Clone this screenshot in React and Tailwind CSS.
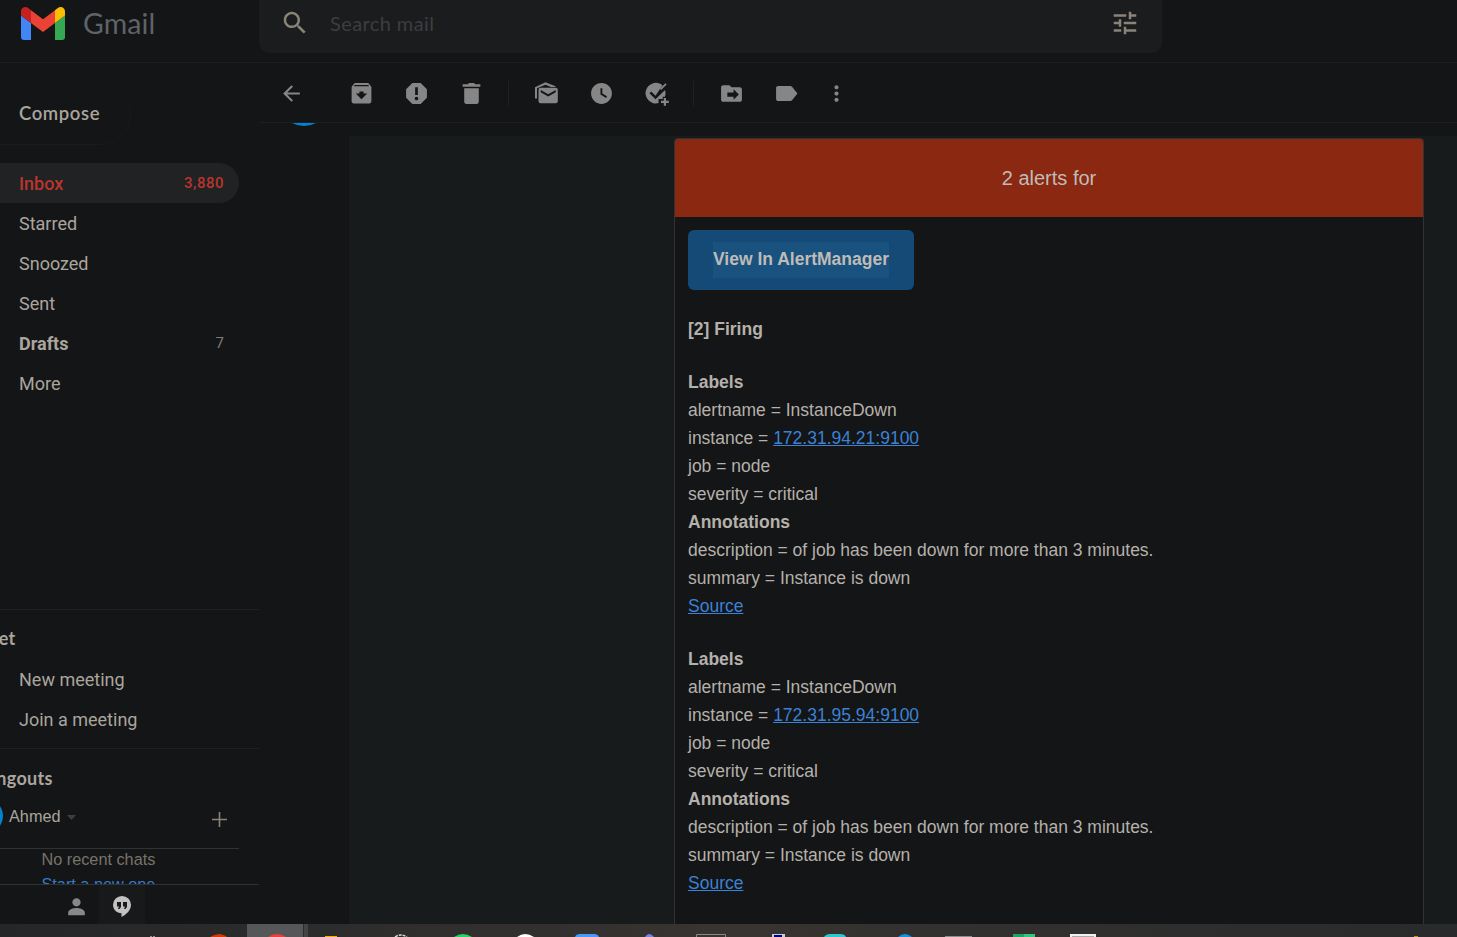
import React from "react";

const ICON = {
  search: "M15.5 14h-.79l-.28-.27C15.41 12.59 16 11.11 16 9.5 16 5.91 13.09 3 9.5 3S3 5.91 3 9.5 5.91 16 9.5 16c1.61 0 3.09-.59 4.23-1.57l.27.28v.79l5 4.99L20.49 19l-4.99-5zm-6 0C7.01 14 5 11.99 5 9.5S7.01 5 9.5 5 14 7.01 14 9.5 11.99 14 9.5 14z",
  tune: "M3 17v2h6v-2H3zM3 5v2h10V5H3zm10 16v-2h8v-2h-8v-2h-2v6h2zM7 9v2H3v2h4v2h2V9H7zm14 4v-2H11v2h10zm-6-4h2V7h4V5h-4V3h-2v6z",
  back: "M20 11H7.83l5.59-5.59L12 4l-8 8 8 8 1.41-1.41L7.83 13H20v-2z",
  archive: "M20.5 4.200l-1.200-1.300C19 2.300 18.500 2 18 2H6c-.5 0-1 .3-1.300.800L3.500 4.200C2.800 4.800 2.500 5.300 2.500 6v13.500c0 1.200.800 2 2 2h15c1.200 0 2-.800 2-2V6c0-.700-.300-1.200-1-1.800zM12 17.500l-5.500-5.500H10v-2h4v2h3.500L12 17.500zM4.500 5l1.100-1.200h12.800L19.500 5h-15z",
  report: "M16 2H8L2 8v8l6 6h8l6-6V8l-6-6zM12 18.500c-.950 0-1.700-.750-1.700-1.700s.750-1.700 1.700-1.700 1.700.750 1.700 1.700-.750 1.700-1.700 1.700zM13.300 13.500h-2.600V6h2.600v7.500z",
  trash: "M5 20c0 1.100.900 2 2 2h10c1.100 0 2-.900 2-2V7H5V20zM20.500 3.200h-5l-1-1.200h-5l-1 1.200h-5v2.200h17V3.200z",
  clock: "M12 2C6.480 2 2 6.480 2 12s4.480 10 10 10 10-4.480 10-10S17.520 2 12 2zm4.400 14.300L11 13V7h1.800v5l4.500 2.700-.900 1.600z",
  move: "M20 6h-8l-2-2H4c-1.100 0-2 .900-2 2v12c0 1.100.900 2 2 2h16c1.100 0 2-.900 2-2V8c0-1.100-.900-2-2-2zm-6 12v-3H8v-4h6V8l5 5-5 5z",
  label: "M17.300 5.500C16.900 5 16.400 4.700 15.700 4.700H4c-1.100 0-2 .900-2 2v10.600c0 1.100.900 2 2 2h11.700c.700 0 1.200-.300 1.600-.800L22.500 12l-5.200-6.500z",
  more: "M12 8c1.100 0 2-.900 2-2s-.900-2-2-2-2 .900-2 2 .900 2 2 2zm0 2c-1.100 0-2 .900-2 2s.900 2 2 2 2-.900 2-2-.900-2-2-2zm0 6c-1.100 0-2 .900-2 2s.900 2 2 2 2-.900 2-2-.900-2-2-2z",
  person: "M12 12c2.210 0 4-1.790 4-4s-1.790-4-4-4-4 1.790-4 4 1.790 4 4 4zm0 1.500c-2.670 0-8 1.340-8 4.500v2.500h16V18c0-3.160-5.330-4.500-8-4.500z",
};

function Icon({ name, className = "size-[25px]" }) {
  return (
    <svg viewBox="0 0 24 24" fill="currentColor" className={`shrink-0 ${className}`}>
      <path fillRule="evenodd" d={ICON[name]} />
    </svg>
  );
}

function GmailLogo() {
  return (
    <svg viewBox="0 0 44 33" className="h-[33px] w-[44px] shrink-0">
      <path fill="#4285f4" d="M3 33h7V16L0 8.500V30a3 3 0 0 0 3 3z" />
      <path fill="#34a853" d="M34 33h7a3 3 0 0 0 3-3V8.500L34 16z" />
      <path fill="#fbbc04" d="M34 3.200V16l10-7.500v-4c0-3.900-4.300-5.800-7.200-3.400z" />
      <path fill="#ea4335" d="M10 16V3.200l12 9 12-9V16l-12 9z" />
      <path fill="#c5221f" d="M0 4.500v4L10 16V3.200L7.200 1.100C4.300-1.300 0 .600 0 4.500z" />
    </svg>
  );
}

function Header() {
  return (
    <header className="flex h-[63px] shrink-0 items-start border-b border-[#1c1e20]">
      <div className="flex w-[259px] shrink-0 items-start pt-[7px] pl-[21px]">
        <GmailLogo />
        <span className="-mt-[2px] ml-[18px] font-[Lato] text-[28.5px] leading-[36px] tracking-[0.1px] text-[#5f6368]">Gmail</span>
      </div>
      <div className="flex h-[53px] w-[903px] items-start rounded-b-[10px] bg-[#1b1c1e] pt-[8px] pl-[21px]">
        <Icon name="search" className="size-[30px] text-[#8a8378]" />
        <span className="ml-[20px] grow font-[Lato] text-[20px] leading-[30px] tracking-[0.4px] text-[#3b3e40]">Search mail</span>
        <Icon name="tune" className="mr-[22px] size-[30px] text-[#8a8378]" />
      </div>
    </header>
  );
}

const folders = [
  { name: "Starred" },
  { name: "Snoozed" },
  { name: "Sent" },
  { name: "Drafts", count: "7", bold: true },
  { name: "More" },
];

function Sidebar() {
  return (
    <aside className="flex w-[259px] shrink-0 flex-col overflow-hidden text-[18px] text-[#aaa59d]">
      <div className="mt-[19px] flex h-[63px] w-[131px] items-center rounded-r-full border-r border-b border-[#191b1d] pt-[2px] pl-[19px] font-[Lato] text-[18.5px] font-semibold tracking-[0.6px]">
        Compose
      </div>
      <nav className="mt-[18px] font-[Roboto]">
        <div className="flex h-10 w-[239px] items-center justify-between rounded-r-full bg-[#202224] pr-[15px] pl-[19px] font-medium text-[#b9352d]">
          <span className="pt-px">Inbox</span>
          <span className="text-[15px] tracking-[0.5px]">3,880</span>
        </div>
        {folders.map((f) => (
          <div key={f.name} className="flex h-10 w-[239px] items-center justify-between pr-[15px] pl-[19px]">
            <span className={f.bold ? "pt-px font-bold" : "pt-px"}>{f.name}</span>
            <span className="text-[15px] text-[#827c73]">{f.count}</span>
          </div>
        ))}
      </nav>
      <section className="mt-[206px] h-[139px] shrink-0 border-t border-[#1e2022]">
        <h2 className="-ml-[28px] flex h-[49px] items-center pt-[8px] font-[Lato] font-bold tracking-[0.2px]">Meet</h2>
        <div className="flex h-10 items-center pl-[19px] font-[Roboto]">New meeting</div>
        <div className="flex h-10 items-center pl-[19px] font-[Roboto]">Join a meeting</div>
      </section>
      <section className="flex h-[136px] shrink-0 flex-col border-t border-[#1e2022]">
        <h2 className="mt-[15px] -ml-[27px] h-[30px] font-[Lato] leading-[29px] font-bold tracking-[0.3px]">Hangouts</h2>
        <div className="flex h-[55px] w-[239px] shrink-0 items-start border-b border-[#303335]">
          <span className="mt-[5px] -ml-[31px] size-[34px] shrink-0 rounded-full bg-[#0284cd]" />
          <span className="mt-[10px] ml-[6px] font-['Liberation_Sans'] text-[16.25px] leading-[24px]">Ahmed</span>
          <svg viewBox="0 0 9 5" className="mt-[21px] ml-[6px] h-[5px] w-[9px] fill-[#3c3f41]"><path d="M0 0h9L4.500 5z" /></svg>
          <svg viewBox="0 0 15 15" className="mt-[18px] mr-[12px] ml-auto size-[15px] stroke-[#8a8378]" strokeWidth="1.6"><path d="M7.500 0v15M0 7.500h15" /></svg>
        </div>
        <div className="h-[35px] w-[239px] overflow-hidden pl-[41.500px] font-['Liberation_Sans'] text-[16.25px] leading-[25px] text-[#78736a]">
          <div className="-mt-[2px]">No recent chats</div>
          <div className="text-[#3a78c2]">Start a new one</div>
        </div>
      </section>
      <div className="flex h-[40px] shrink-0 items-start border-t border-[#303335]">
        <div className="flex h-full w-[99px] justify-end pt-[9px] pr-[10.500px] text-[#888888]"><Icon name="person" /></div>
        <div className="flex h-full w-[46px] justify-center bg-[#17191b] pt-[11px] pr-px">
          <svg viewBox="0 0 18 21" className="h-[21px] w-[18px]">
            <path fill="#c2c2c2" fillRule="evenodd" d="M9 0a9 8.800 0 0 0-9 8.800C0 13.500 3.600 17 8.500 17.300V21c4.500-2.200 9.500-6.600 9.500-12.200A9 8.800 0 0 0 9 0zM4 6h4v5L6.500 13H5l1-2.500H4zM10 6h4v5l-1.500 2H11l1-2.500h-2z" />
          </svg>
        </div>
      </div>
    </aside>
  );
}

function MailIcon() {
  return (
    <svg viewBox="0 0 25 25" fill="currentColor" className="size-[25px] shrink-0">
      <path d="M1 17.500V6.300L11.500 1.300 21.500 5.300v.700h-4.500l-5.500-2.200L3 7.300v10.200z" />
      <path fillRule="evenodd" d="M6.500 6.700h15.300a2 2 0 0 1 2 2v11.600a2 2 0 0 1-2 2H6.500a2 2 0 0 1-2-2V8.700a2 2 0 0 1 2-2zm.2 2.200v2.300l7.500 4.300 7.500-4.300V8.900l-7.500 4.400z" />
    </svg>
  );
}

function TaskIcon() {
  return (
    <svg viewBox="0 0 25 25" className="size-[25px] shrink-0">
      <path fill="currentColor" d="M18.500 4.300A10.300 10.300 0 1 0 14.500 22.100v-4.100h4.200v-2.200h2.200A10.300 10.300 0 0 0 21 9L11.500 18.200 5.500 12.200l1.700-1.700 4.300 4.200z" />
      <path fill="none" stroke="currentColor" strokeWidth="1.800" d="M16.500 8.300l5.500-5.500" />
      <path fill="none" stroke="currentColor" strokeWidth="2.200" d="M20.900 17v7.800M17 20.900h7.800" />
    </svg>
  );
}

function Toolbar() {
  return (
    <div className="flex h-[60px] shrink-0 items-center border-b border-[#1c1e20] pt-[2px] pl-[20px] text-[#868686]">
      <Icon name="back" />
      <div className="ml-[45px] flex items-center gap-[30px]">
        <Icon name="archive" />
        <Icon name="report" />
        <Icon name="trash" />
      </div>
      <div className="ml-[24px] h-[25px] w-px bg-[#1e2022]" />
      <div className="ml-[25px] flex items-center gap-[30px]">
        <MailIcon />
        <Icon name="clock" />
        <TaskIcon />
      </div>
      <div className="ml-[24px] h-[25px] w-px bg-[#1e2022]" />
      <div className="ml-[25px] flex items-center">
        <Icon name="move" />
        <Icon name="label" className="ml-[30px] size-[25px]" />
        <Icon name="more" className="ml-[25px] size-[25px]" />
      </div>
    </div>
  );
}

function Alert({ instance }) {
  return (
    <div className="mb-[25px]">
      <p className="font-bold">Labels</p>
      <p>alertname = InstanceDown</p>
      <p>instance = <a className="text-[#3b82d5] underline">{instance}</a></p>
      <p>job = node</p>
      <p>severity = critical</p>
      <p className="font-bold">Annotations</p>
      <p>description = of job has been down for more than 3 minutes.</p>
      <p>summary = Instance is down</p>
      <p><a className="text-[#3b82d5] underline">Source</a></p>
    </div>
  );
}

function Message() {
  return (
    <div className="flex min-h-0 grow">
      <div className="w-[90px] shrink-0 overflow-hidden">
        <svg viewBox="0 0 24 3" className="ml-[33px] h-[3px] w-[24px]"><path fill="#0284cd" d="M0 0h24Q12 6 0 0z" /></svg>
      </div>
      <div className="mt-[13px] flex grow bg-[#171b1c] pt-[2px] pl-[325px]">
        <article className="w-[750px] shrink-0 overflow-hidden rounded-t-[4px] border border-b-0 border-[#303436] bg-[#141517] font-['Liberation_Sans'] text-[17.5px] leading-[28px] text-[#b5b1aa]">
          <h1 className="flex h-[78px] items-center justify-center bg-[#8a2811] text-[20px] text-[#bfbcb7]">2 alerts for</h1>
          <div className="px-[13px] pt-[13px]">
            <a className="flex h-[60px] w-[226px] items-center justify-center rounded-[6px] bg-[#154a77] font-bold text-[#bfbcb7]">
              <span className="h-[36px] bg-[#19517f] pt-[3px]">View In AlertManager</span>
            </a>
            <p className="mt-[25px] mb-[25px] font-bold">[2] Firing</p>
            <Alert instance="172.31.94.21:9100" />
            <Alert instance="172.31.95.94:9100" />
          </div>
        </article>
      </div>
    </div>
  );
}

function Taskbar() {
  return (
    <footer className="h-[13px] shrink-0 bg-linear-to-r from-[#252628] via-[#373431] to-[#292a2b]">
      <svg viewBox="0 0 1457 13" className="h-[13px] w-full">
        <path fill="#565759" d="M247 0h56v13h-56z" />
        <path fill="#434446" d="M304 0h4v13h-4z" />
        <path fill="#929292" d="M150 12h2v1h-2zM153 12h2v1h-2z" />
        <path fill="#d83b01" d="M210 13q3-2 9-3 6 1 8 3z" />
        <path fill="#ea4335" d="M268 13q9-6 18 0z" />
        <path fill="#f4b400" d="M325 12h12v1h-12z" />
        <path fill="none" stroke="#ddd" strokeWidth="1.500" strokeDasharray="3 1" d="M395 13q6-4 12 0" />
        <path fill="#25d366" d="M454 13q9-6 18 0z" />
        <path fill="#fff" d="M517 13q8-6 17 0z" />
        <path fill="#4a98ff" d="M575 13q1-3 5-3h14q4 0 5 3z" />
        <path fill="#7b83eb" d="M645 13q4-6 9 0z" />
        <path fill="none" stroke="#888" d="M696.500 13v-2.500h29V13" />
        <path fill="#ccc" d="M772 10h13v3h-13z" />
        <path fill="#000090" d="M774 11h8v2h-8z" />
        <path fill="#2fc7d1" d="M824 13q2-3 6-3h10q5 0 6 3z" />
        <path fill="#1492df" d="M898 13q7-6 14 0z" />
        <path fill="#8b8e90" d="M945 12h27v1h-27z" />
        <path fill="#21a366" d="M1013 10h11v3h-11z" />
        <path fill="#33c481" d="M1024 10h11v3h-11z" />
        <path fill="#f0f0f0" d="M1070 10h26v3h-26z" />
        <path fill="#aaa" d="M1072 12h22v1h-22z" />
        <path fill="#b39a1c" d="M1414 12h4v1h-4z" />
      </svg>
    </footer>
  );
}

export default function App() {
  return (
    <div className="flex h-[937px] w-[1457px] flex-col overflow-hidden bg-[#141517]">
      <Header />
      <div className="flex min-h-0 grow">
        <Sidebar />
        <main className="flex min-w-0 grow flex-col overflow-hidden">
          <Toolbar />
          <Message />
        </main>
      </div>
      <Taskbar />
    </div>
  );
}
